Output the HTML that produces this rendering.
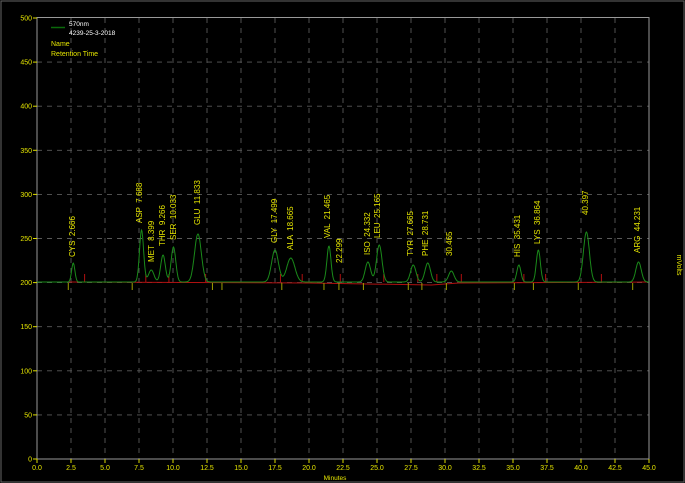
<!DOCTYPE html>
<html><head><meta charset="utf-8"><style>
html,body{margin:0;padding:0;background:#000;}
svg{display:block;}
text{font-family:"Liberation Sans",sans-serif;}
</style></head><body>
<svg id="s" width="685" height="483" xmlns="http://www.w3.org/2000/svg">
<rect x="0" y="0" width="685" height="483" fill="#000"/>
<rect x="1" y="1" width="683" height="481" fill="none" stroke="#666" stroke-width="1"/>
<g id="grid" stroke="#5a5a5a" stroke-width="0.9" stroke-dasharray="5,5" fill="none"></g>
<line x1="37" y1="17" x2="37" y2="459" stroke="#999"/>
<line x1="37" y1="459" x2="649" y2="459" stroke="#999"/>
<line x1="649" y1="17" x2="649" y2="459" stroke="#999"/>
<line x1="37" y1="17.5" x2="649" y2="17.5" stroke="#999"/>
<g id="ticks" stroke="#dddd00" stroke-width="1"></g>
<g id="lab" fill="#e6e600" font-size="7"></g>
<text x="335" y="480" fill="#e6e600" font-size="6.5" text-anchor="middle">Minutes</text>
<text transform="translate(677,265) rotate(90)" fill="#e6e600" font-size="7" text-anchor="middle">mVolts</text>
<line x1="51" y1="27.5" x2="65" y2="27.5" stroke="#0a6a0a" stroke-width="1.5"/>
<text x="69" y="26" fill="#fff" font-size="6.5">570nm</text>
<text x="69" y="35" fill="#fff" font-size="6.5">4239-25-3-2018</text>
<text x="51" y="46" fill="#e6e600" font-size="7">Name</text>
<text x="51" y="56" fill="#e6e600" font-size="7">Retention Time</text>
<path id="red" fill="none" stroke="#b01010" stroke-width="1"/>
<g id="mk" stroke-width="1"></g>
<path id="tr" fill="none" stroke="#1a8a1a" stroke-width="1"/>
<g id="pl" fill="#e6e600" font-size="8"></g>
</svg>
<script>
var NS="http://www.w3.org/2000/svg";
function X(t){return 37+t*13.6;}
function Y(v){return 459-v*0.882;}
function el(p,n,a,txt){var e=document.createElementNS(NS,n);for(var k in a)e.setAttribute(k,a[k]);if(txt!=null)e.textContent=txt;document.getElementById(p).appendChild(e);return e;}
for(var i=1;i<18;i++){el("grid","line",{x1:X(i*2.5),y1:18,x2:X(i*2.5),y2:459});}
for(var v=50;v<500;v+=50){el("grid","line",{x1:37,y1:Y(v),x2:649,y2:Y(v)});}
for(var v=0;v<=500;v+=50){el("ticks","line",{x1:33,y1:Y(v),x2:37,y2:Y(v)});el("lab","text",{x:32,y:Y(v)+2.5,"text-anchor":"end"},String(v));}
for(var i=0;i<=18;i++){var t=i*2.5;el("ticks","line",{x1:X(t),y1:459,x2:X(t),y2:463});el("lab","text",{x:X(t),y:470,"text-anchor":"middle"},t.toFixed(1));}
var P=[[2.666,19,0.12],[7.688,52,0.15],[8.399,12,0.2],[9.266,27,0.17],[10.033,35,0.17],[11.833,48,0.25],[17.499,32,0.25],[18.665,24,0.3],[21.465,36,0.15],[24.332,20,0.2],[25.165,37,0.2],[27.665,17,0.2],[28.731,19,0.2],[30.465,11,0.2],[35.431,17,0.15],[36.864,32,0.15],[40.397,50,0.22],[44.231,20,0.2]];
var d="";for(var t=0;t<=45;t+=0.04){var y=282;for(var j=0;j<P.length;j++){var q=P[j];y-=q[1]*Math.exp(-Math.pow((t-q[0])/q[2],2)/2);}d+=(t==0?"M":"L")+X(t).toFixed(1)+" "+y.toFixed(1);}
document.getElementById("tr").setAttribute("d",d);
document.getElementById("red").setAttribute("d","M"+X(2.3)+" 282 L"+X(20)+" 283 L"+X(29)+" 285 L"+X(31)+" 283 L"+X(45)+" 282");
var Ym=[2.3,7.0,12.9,13.6,18.0,21.1,22.2,24.0,27.3,28.3,30.1,35.1,36.5,39.8,43.8];
Ym.forEach(function(t){el("mk","line",{x1:X(t),y1:283,x2:X(t),y2:290,stroke:"#a0a000"});});
var Rm=[3.5,8.0,9.7,12.4,17.9,19.5,22.3,25.5,28.0,29.4,31.2,35.8,37.4,41.5];
Rm.forEach(function(t){el("mk","line",{x1:X(t),y1:274,x2:X(t),y2:282,stroke:"#b01010"});});
var L=[["CYS  2.666",75,257],["ASP  7.688",142,223],["MET  8.399",154,262],["THR  9.266",165,246],["SER  10.033",176,240],["GLU  11.833",200,225],["GLY  17.499",277,243],["ALA  18.665",293,250],["VAL  21.465",330,238],["22.299",342,263],["ISO  24.332",370,255],["LEU  25.165",380,238],["TYR  27.665",413,256],["PHE  28.731",428,256],["30.465",452,256],["HIS  35.431",520,257],["LYS  36.864",540,244],["40.397",588,215],["ARG  44.231",640,253]];
L.forEach(function(l){el("pl","text",{transform:"translate("+l[1]+","+l[2]+") rotate(-90)","xml:space":"preserve",style:"white-space:pre"},l[0]);});
</script>
</body></html>
